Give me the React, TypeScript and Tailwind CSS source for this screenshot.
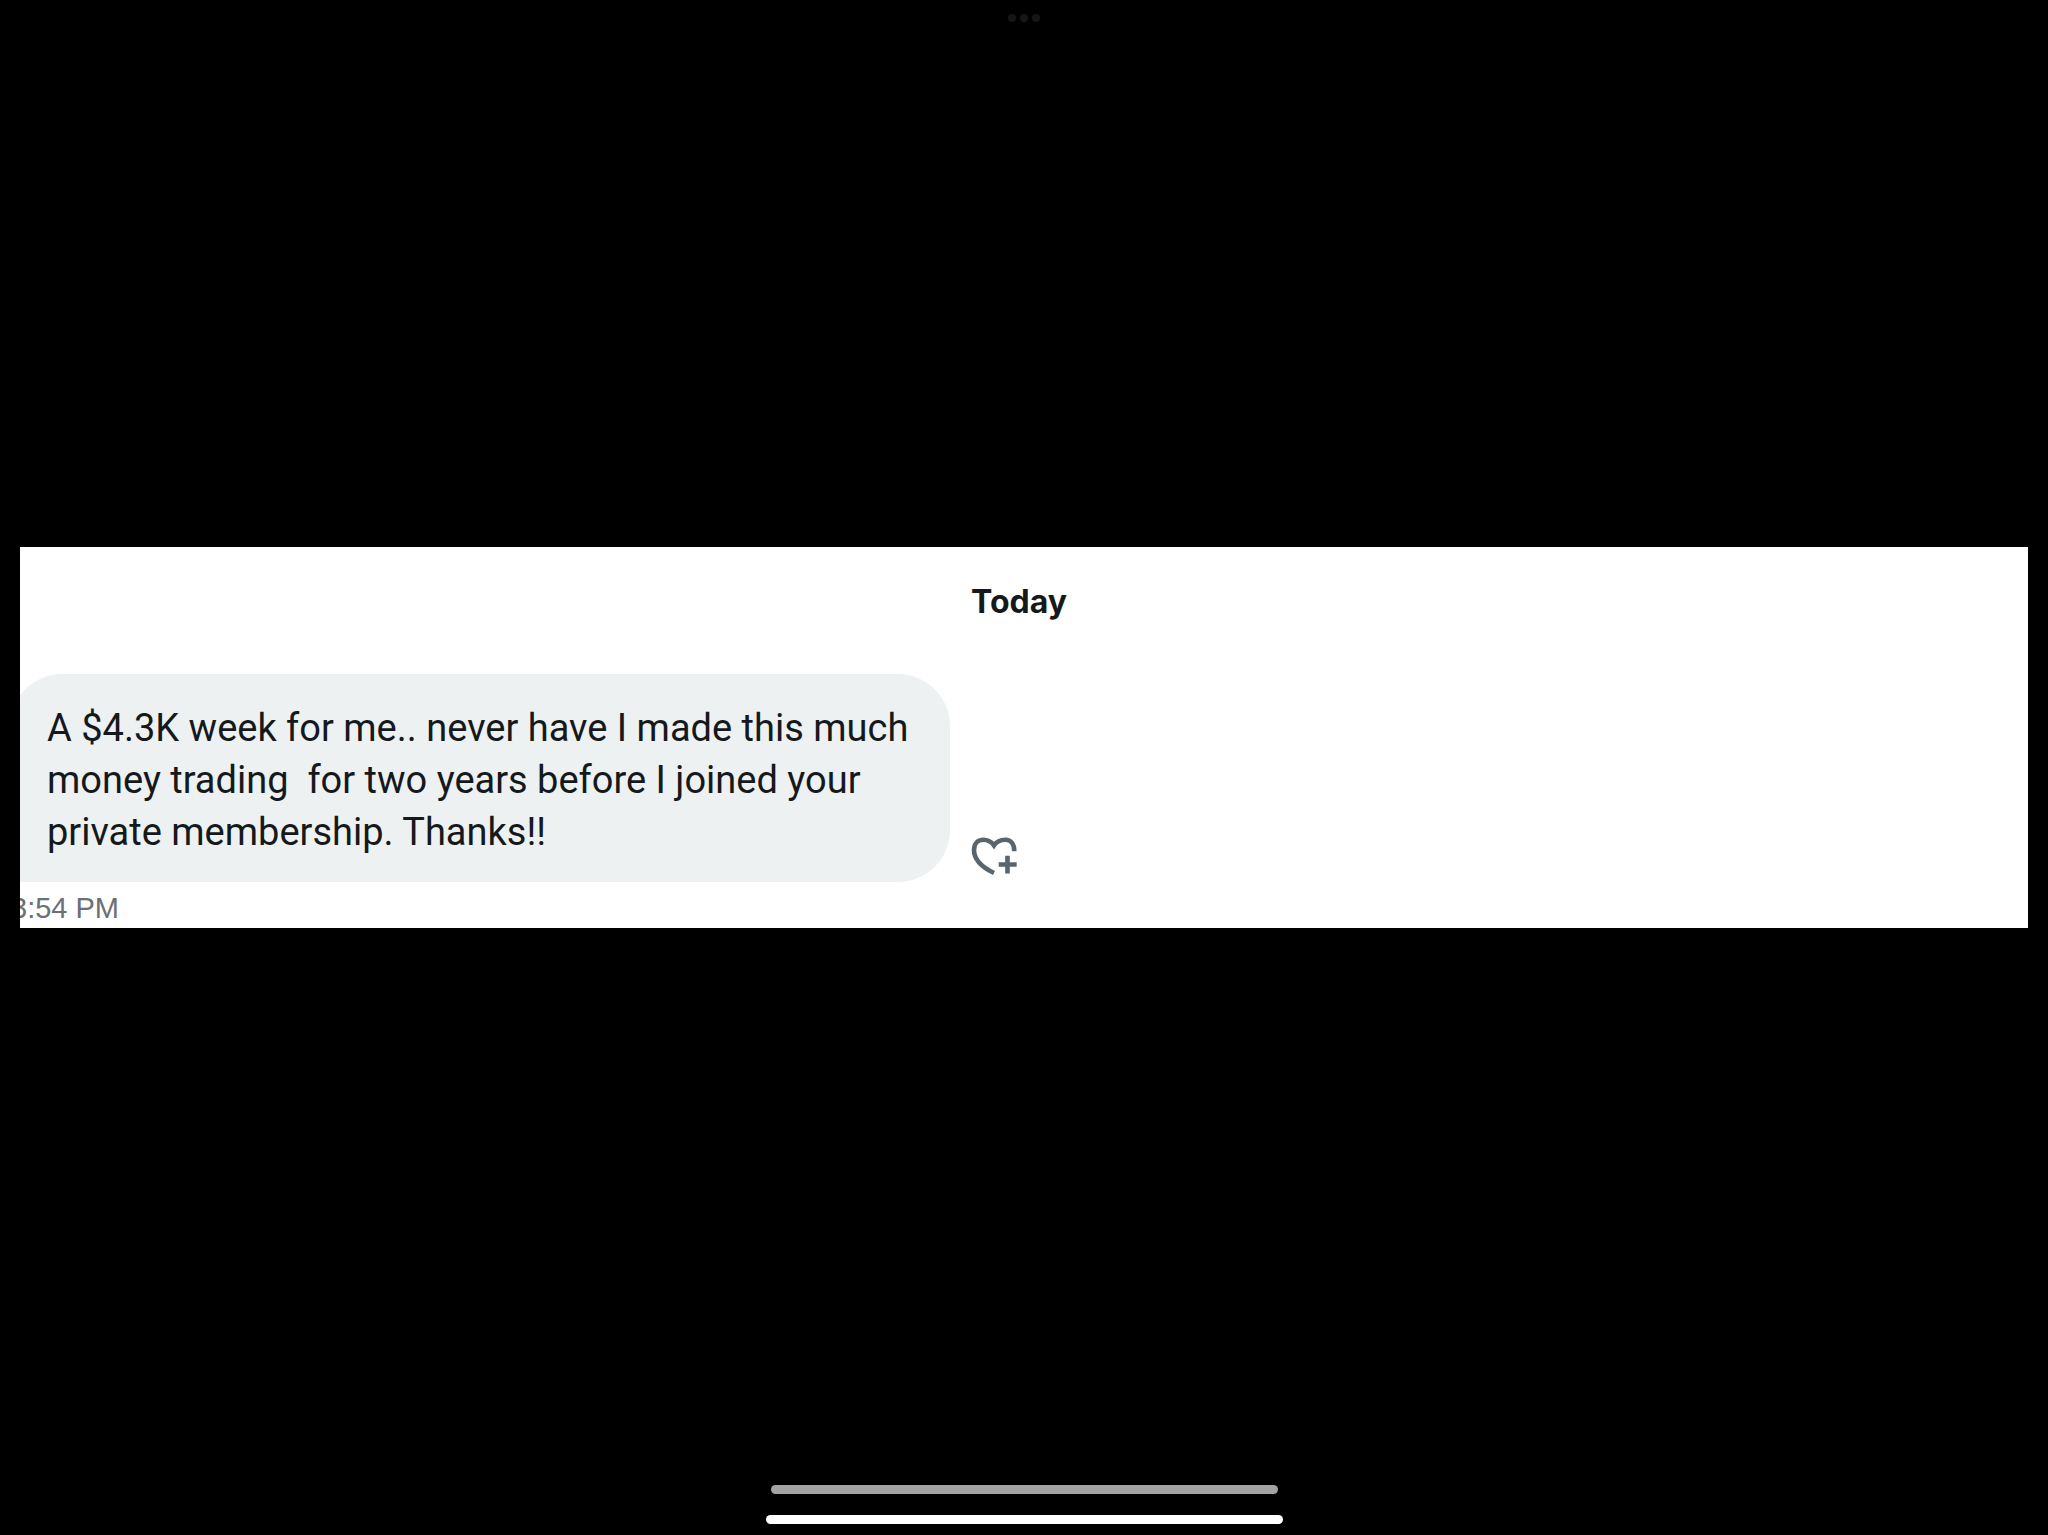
function HeartPlusIcon() {
  return (
    <svg viewBox="0 0 48 40" className="h-10 w-12" fill="none" stroke="currentColor" strokeWidth="4.6" aria-hidden="true">
      <path d="M44.300 15.200C44.300 8 41 3.800 35.300 3.800C30 3.800 26.500 5.800 24 9.400C21.500 5.800 18 3.800 13.300 3.800C7.500 3.800 4 8.200 4 14C4 22.500 10.500 30.500 24 37" />
      <path d="M37.500 19.700V37.500M28.700 28.500H46.700" />
    </svg>
  );
}

function MultitaskingDots() {
  return (
    <header className="flex h-9 items-center justify-center gap-1">
      <span className="size-2 rounded-full bg-[#161616]" />
      <span className="size-2 rounded-full bg-[#161616]" />
      <span className="size-2 rounded-full bg-[#161616]" />
    </header>
  );
}

const message =
  "A $4.3K week for me.. never have I made this much\nmoney trading  for two years before I joined your\nprivate membership. Thanks!!";

export default function App() {
  return (
    <div className="flex min-h-screen flex-col bg-black font-[Roboto,sans-serif]">
      <MultitaskingDots />
      <main className="flex flex-1 flex-col justify-center px-5">
        <section className="overflow-hidden bg-white">
          <div className="-ml-[10px] flex flex-col">
            <h1 className="pt-[31px] pb-12 text-center font-[Inter,sans-serif] text-[32px] leading-[48px] font-bold text-[#16191c]">
              Today
            </h1>
            <div className="flex items-end gap-5">
              <p className="w-[940px] rounded-[52px] rounded-bl-lg bg-[#edf1f2] pt-7 pb-6 pl-[37px] text-[38px] leading-[52px] whitespace-pre-wrap text-[#16191c]">
                {message}
              </p>
              <button type="button" aria-label="Add reaction" className="mb-[6px] text-[#5a646d]">
                <HeartPlusIcon />
              </button>
            </div>
            <time className="pt-[6px] pl-px font-['Liberation_Sans',sans-serif] text-[29px] leading-10 text-[#6b7075]">
              3:54 PM
            </time>
          </div>
        </section>
      </main>
      <footer className="flex flex-col items-center gap-[21px] pt-[46px] pb-[11px]">
        <div className="h-[9px] w-[507px] max-w-full rounded-full bg-[#a3a3a3]" />
        <div className="h-[9px] w-[517px] max-w-full rounded-full bg-white" />
      </footer>
    </div>
  );
}
